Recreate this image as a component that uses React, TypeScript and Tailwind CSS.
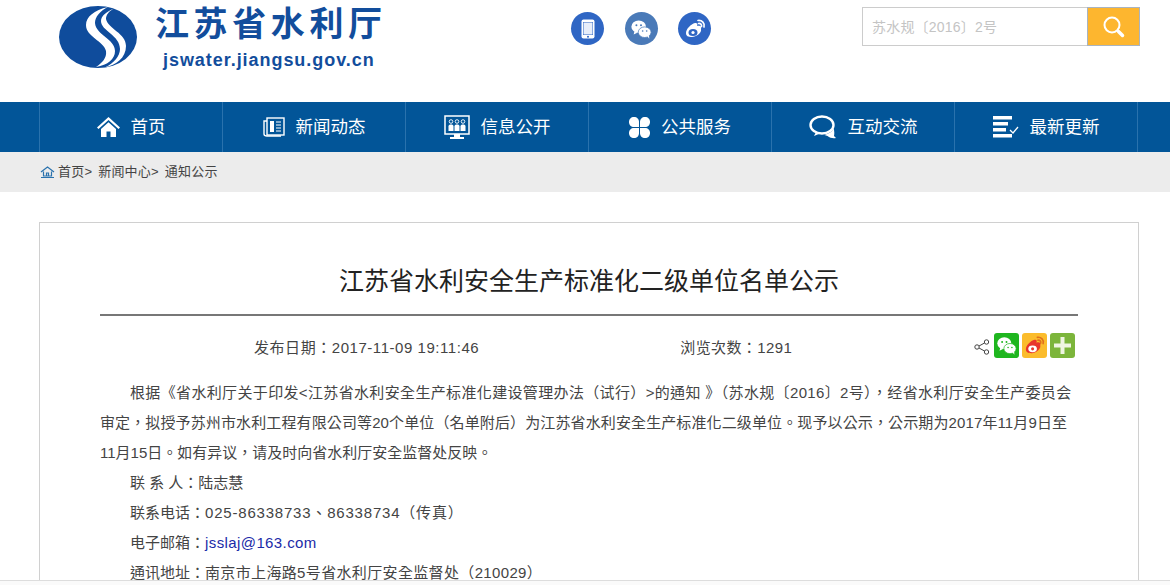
import React from 'react';

const cjk = { fontFamily: '"Liberation Sans", "Noto Sans CJK SC", sans-serif' };
const bodyFont = { fontFamily: '"Liberation Sans", "Noto Sans CJK TC", sans-serif' };

const Logo = () => (
  <svg width="80" height="64" viewBox="0 0 80 64">
    <ellipse cx="40" cy="32" rx="39" ry="31" fill="#0f4c9c" />
    <path d="M50 2C36 5 28 12 28 20C28 32 46 36 48 46C49 53 44 58 38 62C50 60 57 54 57 46C57 34 38 30 37 18C37 12 42 6 50 2z" fill="#fff" />
    <path d="M56 3.500C48 7 43 11 43 16C43 26 62 30 62 44C62 51 56 58 47 62.500C58 60 68 53 68 41C68 28 50 24 48 14C48 10 51 6 56 3.500z" fill="#fff" />
  </svg>
);

const RoundIcon = ({ bg, children }: { bg: string; children: React.ReactNode }) => (
  <div className={`w-[33px] h-[33px] rounded-full flex items-center justify-center ${bg}`}>{children}</div>
);

const WeChat = ({ size = 22, fill = '#fff', eye = '#4a7ab8' }: { size?: number; fill?: string; eye?: string }) => (
  <svg width={size} height={size} viewBox="0 0 24 24">
    <ellipse cx="9.500" cy="9.500" rx="8" ry="6.800" fill={fill} />
    <path d="M5 14l-1 4 4-2z" fill={fill} />
    <circle cx="7" cy="8" r="1.100" fill={eye} />
    <circle cx="12" cy="8" r="1.100" fill={eye} />
    <ellipse cx="16" cy="15.500" rx="7" ry="5.800" fill={fill} stroke={eye} strokeWidth="0.800" />
    <path d="M19 20l2 2.500-.3-4z" fill={fill} />
    <circle cx="13.800" cy="14.200" r="0.900" fill={eye} />
    <circle cx="18.200" cy="14.200" r="0.900" fill={eye} />
  </svg>
);

const Weibo = ({ size = 24, body = '#fff', eye = '#2f66c4', arc = '#fff' }: { size?: number; body?: string; eye?: string; arc?: string }) => (
  <svg width={size} height={size} viewBox="0 0 24 24">
    <path d="M3 16c0-4 5-9 9-10 2-.5 3 1 2 3 3-1 5 0 4 3 1 4-5 8-9 8s-6-1-6-4z" fill={body} />
    <ellipse cx="10" cy="15.500" rx="4.500" ry="3.500" fill={eye} />
    <circle cx="10" cy="15.500" r="1.600" fill={body} />
    <path d="M15 3.500c4-.5 7 2.500 6 6.500M15.500 6.500c2-.3 3.500 1 3 3" fill="none" stroke={arc} strokeWidth="1.700" strokeLinecap="round" />
  </svg>
);

const HomeIcon = () => (
  <svg width="23" height="20" viewBox="0 0 23 20" fill="#fff">
    <path d="M11.500 0L23 10.500l-1.500 1.500-10-9-10 9L0 10.500z" />
    <path d="M4 12l7.500-6.700L19 12v8h-5.500v-5.500h-4V20H4z" />
  </svg>
);

const NewsIcon = () => (
  <svg width="22" height="20" viewBox="0 0 22 20" fill="none" stroke="#fff" strokeWidth="1.400">
    <rect x="4" y="1" width="17" height="17" />
    <path d="M4 4H1v13c0 1.500 1 2 3 2h14" />
    <rect x="7" y="4" width="4" height="11" fill="#fff" stroke="none" />
    <path d="M13 5h5M13 8h5M13 11h5M13 14h5" strokeWidth="1.200" />
  </svg>
);

const ScreenIcon = () => (
  <svg width="26" height="25" viewBox="0 0 26 25">
    <rect x="1" y="1" width="24" height="18" fill="none" stroke="#fff" strokeWidth="1.500" />
    <rect x="10" y="19" width="6" height="3" fill="#fff" />
    <rect x="6" y="22" width="14" height="2" fill="#fff" />
    {[7, 13, 19].map((x) => (
      <g key={x}>
        <circle cx={x} cy="6.500" r="1.800" fill="none" stroke="#fff" strokeWidth="0.900" />
        <path d={`M${x - 2.500} 16v-4.500c0-1.500 1-2 2.500-2s2.500.5 2.500 2V16z`} fill="#fff" />
      </g>
    ))}
  </svg>
);

const CloverIcon = () => (
  <svg width="21" height="21" viewBox="0 0 21 21" fill="#fff">
    <path d="M5 0c3 0 5 2 5 5v5H5C2 10 0 8 0 5s2-5 5-5z" />
    <path d="M16 0c3 0 5 2 5 5s-2 5-5 5h-5V5c0-3 2-5 5-5z" />
    <path d="M5 11h5v5c0 3-2 5-5 5s-5-2-5-5 2-5 5-5z" />
    <path d="M11 11h5c3 0 5 2 5 5s-2 5-5 5-5-2-5-5z" />
  </svg>
);

const ChatIcon = () => (
  <svg width="28" height="24" viewBox="0 0 28 24" fill="none">
    <ellipse cx="13" cy="10" rx="11.500" ry="8.500" stroke="#fff" strokeWidth="2.400" />
    <path d="M7 17l-2 4 6-2.500z" fill="#fff" />
    <path d="M19 18.500c3-1 5-3 5.500-5.500 1 3 1 6 .5 8l2 2c-3 .5-6 0-8.500-2l-3-1z" fill="#fff" />
  </svg>
);

const UpdateIcon = () => (
  <svg width="26" height="22" viewBox="0 0 26 22" fill="#fff">
    <rect x="0" y="0" width="19" height="3.500" />
    <rect x="0" y="6" width="15" height="3.500" />
    <rect x="0" y="12" width="13" height="3.500" />
    <rect x="0" y="18" width="19" height="3.500" />
    <path d="M17 14l3 3 5-6" fill="none" stroke="#fff" strokeWidth="1.300" />
  </svg>
);

const navItems = [
  { label: '首页', icon: <HomeIcon /> },
  { label: '新闻动态', icon: <NewsIcon /> },
  { label: '信息公开', icon: <ScreenIcon /> },
  { label: '公共服务', icon: <CloverIcon /> },
  { label: '互动交流', icon: <ChatIcon /> },
  { label: '最新更新', icon: <UpdateIcon /> },
];

export default function App() {
  return (
    <div className="relative h-[585px] overflow-hidden bg-white text-[#333]" style={cjk}>
      {/* header */}
      <div className="h-[102px] flex">
        <div className="ml-[58px] mt-[5px] h-fit flex">
          <Logo />
          <div className="ml-[18px] -mt-[2px] w-[228px] flex flex-col">
            <div className="-ml-[1px] text-[34px] leading-[42px] font-bold tracking-[4.6px] text-[#124d9c] whitespace-nowrap">江苏省水利厅</div>
            <div className="ml-[7px] mt-[3px] text-[18px] leading-[24px] font-bold tracking-[0.95px] text-[#124d9c] whitespace-nowrap">jswater.jiangsu.gov.cn</div>
          </div>
        </div>
        <div className="ml-[187px] mt-[12px] h-fit flex gap-[20.500px]">
          <RoundIcon bg="bg-[#2f66c4]">
            <svg width="14" height="20" viewBox="0 0 14 20">
              <rect x="0.500" y="0.500" width="13" height="19" rx="2" fill="#fff" />
              <rect x="2" y="3" width="10" height="13" fill="#2f66c4" />
              <rect x="2.500" y="3.500" width="9" height="12" fill="#e8eefa" />
              <circle cx="7" cy="17.700" r="1" fill="#2f66c4" />
            </svg>
          </RoundIcon>
          <RoundIcon bg="bg-[#4a7ab8]"><WeChat /></RoundIcon>
          <RoundIcon bg="bg-[#2f66c4]"><Weibo /></RoundIcon>
        </div>
        <div className="ml-[151px] mt-[7px] h-fit flex">
          <div className="w-[225px] h-[39px] border border-[#ccc] border-r-0 pl-[9px] text-[14px] leading-[39px] tracking-[0.2px] text-[#c4c4c4] whitespace-nowrap">苏水规〔2016〕2号</div>
          <div className="w-[53px] h-[39px] bg-[#fdb62f] border border-[#a9b4c0] flex items-center justify-center">
            <svg width="24" height="24" viewBox="0 0 24 24" fill="none">
              <circle cx="10" cy="10" r="7.500" stroke="#fff" strokeWidth="2" />
              <path d="M16.500 16.500l4 4" stroke="#fff" strokeWidth="3.500" strokeLinecap="round" />
            </svg>
          </div>
        </div>
      </div>

      {/* nav */}
      <div className="h-[50px] bg-[#025598] pl-[39px] flex">
        {navItems.map((item) => (
          <div key={item.label} className="w-[183px] border-l border-[#2a72ad] flex items-center justify-center gap-[11px] text-[17.5px] text-white">
            {item.icon}
            <span>{item.label}</span>
          </div>
        ))}
        <div className="border-l border-[#2a72ad]" />
      </div>

      {/* breadcrumb */}
      <div className="h-[40px] bg-[#ececec] pl-[40px] flex items-center text-[13px] tracking-[0.2px] text-[#444]">
        <svg width="15" height="14" viewBox="0 0 15 14" fill="none" stroke="#2a72ad" strokeWidth="1.200" className="mr-[3px]">
          <path d="M1 7l6.500-5L14 7M3.500 6.500V11h8V6.500M6.500 11V8h2v3M1 12.500h13" />
        </svg>
        <span>首页&gt;</span>
        <span className="ml-[6px]">新闻中心&gt;</span>
        <span className="ml-[6px]">通知公示</span>
      </div>

      {/* article */}
      <div className="mx-[39px] mt-[30px] w-[1100px] h-[400px] border border-[#d0d0d0] px-[60px]">
        <h1 className="pt-[39px] h-[93px] border-b-2 border-[#777] text-center text-[25px] leading-[38px] text-[#222] font-normal">
          江苏省水利安全生产标准化二级单位名单公示
        </h1>
        <div className="relative h-[60px] mt-[2px] text-[15px] text-[#444] flex items-center" style={bodyFont}>
          <span className="ml-[154px] tracking-[0.55px]">发布日期：2017-11-09 19:11:46</span>
          <span className="ml-[201px] tracking-[0.4px]">浏览次数：1291</span>
          <div className="absolute right-[3px] top-[15px] flex items-center gap-[3px]">
            <svg width="16" height="16" viewBox="0 0 16 16" fill="none" stroke="#444" strokeWidth="1" className="mr-[1px] mt-[3px]">
              <circle cx="3" cy="8" r="2.200" />
              <circle cx="12.500" cy="3" r="2.200" />
              <circle cx="12.500" cy="13" r="2.200" />
              <path d="M5 7l5.500-3M5 9l5.500 3" />
            </svg>
            <div className="w-[25px] h-[25px] rounded-[3px] bg-[#1fb61f] flex items-center justify-center">
              <WeChat size={21} eye="#1fb61f" />
            </div>
            <div className="w-[25px] h-[25px] rounded-[3px] bg-[#fbbc2c] flex items-center justify-center">
              <Weibo size={23} body="#e8352b" eye="#fff" arc="#e0701c" />
            </div>
            <div className="w-[25px] h-[25px] rounded-[3px] bg-[#7cb53b] flex items-center justify-center">
              <svg width="17" height="17" viewBox="0 0 17 17" fill="#eef5e0">
                <rect x="6.500" y="0" width="4" height="17" />
                <rect x="0" y="6.500" width="17" height="4" />
              </svg>
            </div>
          </div>
        </div>
        <div className="text-[15px] leading-[30px] text-[#444] whitespace-nowrap" style={bodyFont}>
          <p className="pl-[30px] tracking-[0.35px]">根据《省水利厅关于印发&lt;江苏省水利安全生产标准化建设管理办法（试行）&gt;的通知 》（苏水规〔2016〕2号），经省水利厅安全生产委员会</p>
          <p className="tracking-[0.12px]">审定，拟授予苏州市水利工程有限公司等20个单位（名单附后）为江苏省水利安全生产标准化二级单位。现予以公示，公示期为2017年11月9日至</p>
          <p>11月15日。如有异议，请及时向省水利厅安全监督处反映。</p>
          <p className="pl-[30px]">联 系 人：陆志慧</p>
          <p className="pl-[30px]">联系电话：<span className="tracking-[0.8px]">025-86338733、86338734（传真）</span></p>
          <p className="pl-[30px]">电子邮箱：<span className="tracking-[0.4px] text-[#1a2aa8]">jsslaj@163.com</span></p>
          <p className="pl-[30px]">通讯地址：<span className="tracking-[0.35px]">南京市上海路5号省水利厅安全监督处（210029）</span></p>
        </div>
      </div>

      {/* bottom edge of the window */}
      <div className="absolute left-0 right-0 bottom-0 h-[5px] bg-[#fafafa] border-t border-[#ddd]" />
    </div>
  );
}
